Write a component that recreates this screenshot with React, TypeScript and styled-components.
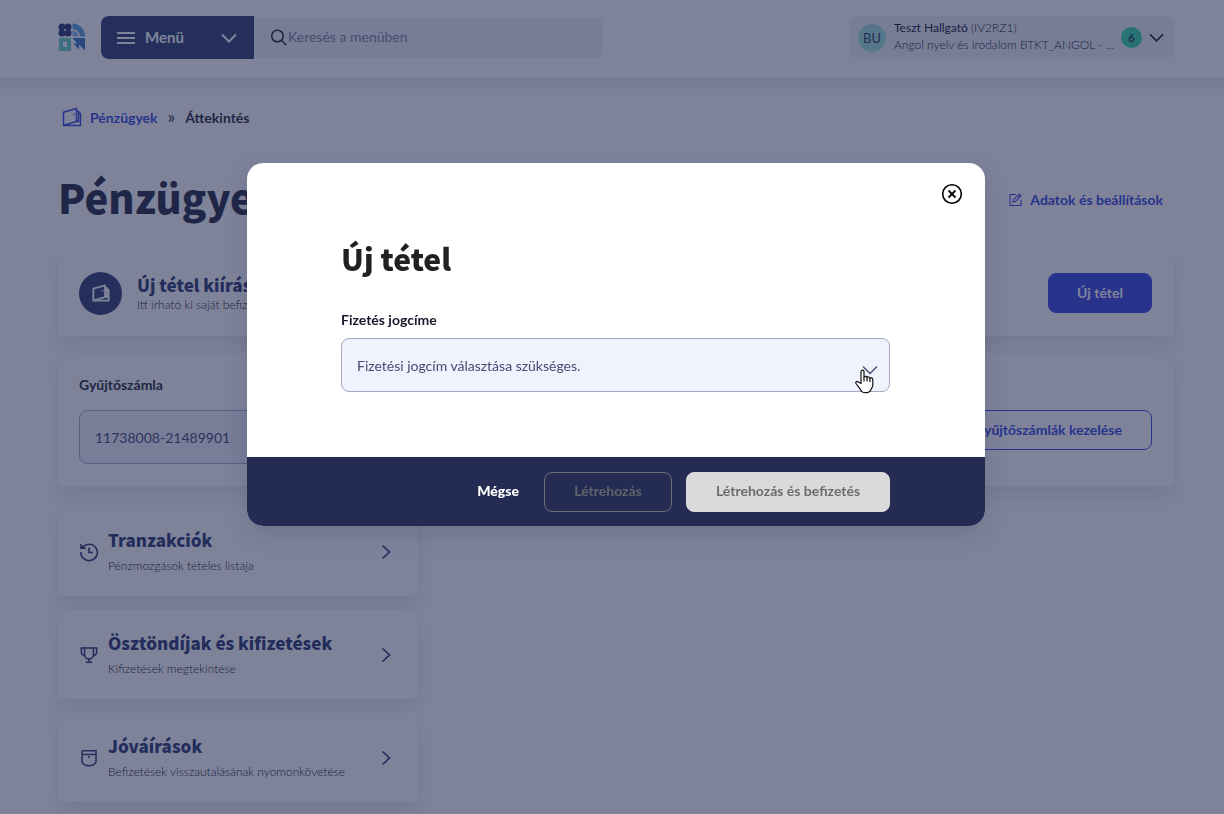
import React from "react";
import styled, { createGlobalStyle } from "styled-components";

const headingFont = `"Noto Sans CJK JP", "Open Sans", sans-serif`;
const navy = "#242c53";
const blue = "#303ddb";

const GlobalStyle = createGlobalStyle`
  *, *::before, *::after { box-sizing: border-box; }
  body { margin: 0; background: #fff; overflow: hidden; }
  body, button, input, select { font-family: Lato, "Open Sans", sans-serif; }
  h1, h2, h3, p { margin: 0; }
  button { margin: 0; padding: 0; border: 0; background: none; cursor: pointer; }
  a { color: inherit; text-decoration: none; }
  svg { display: block; flex: none; }
`;

const Header = styled.header`
  display: flex;
  align-items: center;
  height: 87px;
  padding: 0 50px 2px 58px;
  border-bottom: 10px solid #eeeff2;
  box-shadow: 0 4px 10px rgba(20, 20, 60, 0.04);
`;

const Logo = styled.a`
  margin-right: 15px;
`;

const MenuButton = styled.button`
  display: flex;
  align-items: center;
  width: 153px;
  height: 43px;
  padding: 0 17px 0 16px;
  border-radius: 8px 0 0 8px;
  background: #29346a;
  color: #fff;
  font-size: 15px;
  font-weight: 700;
  line-height: 20px;
`;

const MenuLabel = styled.span`
  flex: 1;
  padding: 0 0 2px 10px;
  text-align: left;
`;

const Search = styled.label`
  display: flex;
  align-items: center;
  flex: 0 1 349px;
  height: 40px;
  padding-left: 16px;
  border-radius: 0 8px 8px 0;
  background: #f0f1f5;
  color: #16182a;
`;

const SearchInput = styled.input`
  flex: 1;
  min-width: 0;
  padding: 0 0 2px;
  border: 0;
  outline: 0;
  background: none;
  font-size: 14px;
  &::placeholder { color: #777b98; }
`;

const Profile = styled.button`
  display: flex;
  align-items: center;
  width: 324px;
  height: 43px;
  margin-left: auto;
  padding: 0 10px 0 8px;
  border-radius: 8px;
  background: #f0f1f5;
  color: #060822;
  text-align: left;
`;

const Avatar = styled.span`
  display: grid;
  place-items: center;
  width: 28px;
  height: 28px;
  margin-right: 8px;
  border-radius: 50%;
  background: #9fe3d9;
  color: ${navy};
  font-size: 13px;
`;

const ProfileText = styled.span`
  flex: 1;
  min-width: 0;
  padding-bottom: 3px;
  font-size: 12px;
  font-weight: 300;
  line-height: 17px;
`;

const Line = styled.span`
  display: block;
  white-space: nowrap;
`;

const Count = styled.span`
  display: grid;
  place-items: center;
  width: 21px;
  height: 21px;
  margin: 0 7px 0 8px;
  border-radius: 50%;
  background: #2fd6a4;
  color: #14183a;
  font-size: 12px;
  font-weight: 600;
`;

const Main = styled.main`
  padding: 20px 50px 12px 58px;
`;

const Breadcrumb = styled.nav`
  display: flex;
  align-items: center;
  height: 20px;
  padding-left: 4px;
  color: #16182a;
  font-size: 14px;
  font-weight: 700;
`;

const CrumbLink = styled.a`
  display: flex;
  align-items: center;
  gap: 8px;
  color: ${blue};
`;

const Separator = styled.span`
  margin: 0 10px;
  padding-bottom: 2px;
  color: #16182a;
  font-size: 18px;
  font-weight: 400;
`;

const TitleRow = styled.div`
  display: flex;
  align-items: center;
  justify-content: space-between;
  height: 64px;
  margin: 40px 0 19px;
  padding-right: 11px;
`;

const PageTitle = styled.h1`
  padding-bottom: 4px;
  color: #1c1f36;
  font: 900 40px/60px ${headingFont};
`;

const SettingsLink = styled.a`
  display: flex;
  align-items: center;
  gap: 8px;
  color: ${blue};
  font-size: 14px;
  font-weight: 700;
`;

const Card = styled.section`
  border-radius: 4px;
  background: #fff;
  box-shadow: 0 10px 18px rgba(20, 20, 60, 0.1);
`;

const NewItemCard = styled(Card)`
  display: flex;
  align-items: center;
  height: 86px;
  padding: 0 22px 0 21px;
`;

const RoundIcon = styled.span`
  display: grid;
  place-items: center;
  width: 43px;
  height: 43px;
  margin-right: 15px;
  border-radius: 50%;
  background: #29346a;
  color: #fff;
`;

const CardText = styled.span`
  display: block;
  flex: 1;
`;

const CardTitle = styled.h2`
  color: #242e66;
  font: 900 17px/24px ${headingFont};
`;

const CardNote = styled.p`
  padding-bottom: 1px;
  color: #060822;
  font-size: 12px;
  font-weight: 300;
  line-height: 16px;
`;

const Button = styled.button<{ $kind: "solid" | "outline" | "ghost" | "disabled"; $width: number }>`
  width: ${(p) => p.$width}px;
  height: 40px;
  padding-bottom: 2px;
  border: 1px solid
    ${(p) => ({ solid: blue, outline: blue, ghost: "#6b6c74", disabled: "#dadada" })[p.$kind]};
  border-radius: 8px;
  background: ${(p) => ({ solid: blue, outline: "#fff", ghost: "none", disabled: "#dadada" })[p.$kind]};
  color: ${(p) => ({ solid: "#fff", outline: blue, ghost: "#62636b", disabled: "#6c6c6c" })[p.$kind]};
  font-size: 14px;
  font-weight: 700;
`;

const AccountCard = styled(Card)`
  height: 132px;
  margin-top: 18px;
  padding: 21px 22px 0 21px;
`;

const FieldLabel = styled.label`
  display: block;
  color: #16182a;
  font-size: 14px;
  font-weight: 700;
  line-height: 20px;
`;

const AccountRow = styled.div`
  display: flex;
  gap: 16px;
  margin-top: 15px;
`;

const AccountInput = styled.input`
  flex: 1;
  height: 54px;
  padding: 0 15px;
  border: 1px solid #a9a9c8;
  border-radius: 8px;
  background: #f0f1fa;
  color: #3a3f6e;
  font-size: 14px;
`;

const LinkList = styled.div`
  display: grid;
  gap: 14px;
  width: 360px;
  margin-top: 21px;
`;

const LinkCard = styled.a`
  display: flex;
  align-items: center;
  height: 89px;
  padding: 0 24px 0 22px;
  border-radius: 4px;
  background: #fff;
  box-shadow: 0 10px 18px rgba(20, 20, 60, 0.1);
  color: #242e66;
`;

const LinkText = styled(CardText)`
  padding: 0 0 2px 10px;
`;

const LinkNote = styled(CardNote)`
  margin-top: 6px;
  padding: 0;
`;

const Backdrop = styled.div`
  position: fixed;
  inset: 0;
  display: flex;
  align-items: flex-start;
  justify-content: center;
  padding: 163px 0 0 8px;
  background: rgba(36, 44, 83, 0.59);
`;

const Dialog = styled.div`
  width: 738px;
  max-width: 100%;
  overflow: hidden;
  border-radius: 16px;
  background: #fff;
  box-shadow: 0 8px 24px rgba(20, 20, 60, 0.14);
`;

const DialogTop = styled.div`
  display: flex;
  justify-content: flex-end;
  padding: 20px 22px 0;
  color: #111;
`;

const DialogBody = styled.div`
  padding: 30px 95px 65px 94px;
`;

const DialogTitle = styled.h2`
  color: #212121;
  font: 900 30px/46px ${headingFont};
`;

const DialogLabel = styled(FieldLabel)`
  margin: 29px 0 8px;
`;

const SelectBox = styled.div`
  position: relative;
  color: #45496f;
`;

const Select = styled.select`
  display: block;
  width: 100%;
  height: 54px;
  padding: 0 40px 0 15px;
  border: 1px solid #a6a8c4;
  border-radius: 8px;
  background: #f0f3fd;
  color: #45496f;
  font-size: 14px;
  appearance: none;
`;

const SelectArrow = styled.span`
  position: absolute;
  top: 24px;
  right: 12px;
  pointer-events: none;
`;

const Pointer = styled.span`
  position: absolute;
  top: 31px;
  right: 16px;
  pointer-events: none;
`;

const DialogFooter = styled.footer`
  display: flex;
  align-items: center;
  justify-content: flex-end;
  gap: 14px;
  height: 69px;
  padding-right: 95px;
  background: ${navy};
`;

const CancelButton = styled.button`
  margin-right: 11px;
  padding-bottom: 2px;
  color: #fff;
  font-size: 14px;
  font-weight: 900;
`;

function LogoMark() {
  return (
    <svg width="28" height="29" viewBox="0 0 28 29">
      <g fill="#1f2a68">
        <circle cx="4" cy="4" r="3.5" />
        <circle cx="10" cy="4" r="3.5" />
        <circle cx="4" cy="10" r="3.5" />
        <circle cx="10" cy="10" r="3.5" />
        <rect x="4" y="4" width="6" height="6" />
      </g>
      <circle cx="7" cy="7" r="1" fill="#fff" />
      <path d="M14.500 .5A12.500 13 0 0 1 27 13.500h-5A7.500 7.500 0 0 0 14.500 6z" fill="#4f9fe0" />
      <path d="M14.500 7.500a6 6 0 0 1 6 6h-6z" fill="#7db8ea" />
      <path d="M1.500 15.500h11v12h-11z M4.500 18.500v6h5v-6z" fill="#5ccdbb" fillRule="evenodd" stroke="#5ccdbb" />
      <path d="M14.500 15H27v12.500l-6-6v5l-6-6h4z" fill="#2d72c0" />
    </svg>
  );
}

function Burger() {
  return (
    <svg width="18" height="14" viewBox="0 0 18 14" stroke="currentColor" strokeWidth="2">
      <path d="M0 2h18M0 7h18M0 12h18" />
    </svg>
  );
}

function Chevron({ size = 16, width = 2 }: { size?: number; width?: number }) {
  return (
    <svg width={size} height={size} viewBox="0 0 16 16" fill="none" stroke="currentColor" strokeWidth={width}>
      <path d="M1 4.500l7 7 7-7" />
    </svg>
  );
}

function ChevronRight() {
  return (
    <svg width="16" height="16" viewBox="0 0 16 16" fill="none" stroke="currentColor" strokeWidth="1.700">
      <path d="M4.500 1.500l7 6.500-7 6.500" />
    </svg>
  );
}

function Magnifier() {
  return (
    <svg width="18" height="18" viewBox="0 0 18 18" fill="none" stroke="currentColor" strokeWidth="1.500">
      <circle cx="7.500" cy="7" r="5.800" />
      <path d="M11.500 11.200l5 5" />
    </svg>
  );
}

function Wallet({ size = 20, stroke = 1.5 }: { size?: number; stroke?: number }) {
  return (
    <svg
      width={size}
      height={size}
      viewBox="0 0 20 20"
      fill="none"
      stroke="currentColor"
      strokeWidth={stroke}
      strokeLinejoin="round"
    >
      <path d="M1.500 5.200 14.500 1.500v13L1.500 18.500z" />
      <path d="M1.500 18.500h17V6.200h-2M14.500 4.200h2v10.300h-2" />
      <path d="M11 7.500h1.500" />
    </svg>
  );
}

function EditIcon() {
  return (
    <svg width="13" height="13" viewBox="0 0 13 13" fill="none" stroke="currentColor" strokeWidth="1.100">
      <path d="M7 1.500H1v11h11V7" />
      <path d="M4 9.300l.6-2.600L10.300 1 12 2.700 6.400 8.600zM9 2.300l1.800 1.700" />
    </svg>
  );
}

function HistoryIcon() {
  return (
    <svg width="18" height="20" viewBox="0 0 18 20" fill="none" stroke="currentColor" strokeWidth="1.600">
      <path d="M2.500 5.500A8.200 8.200 0 1 1 .9 10" />
      <path d="M1 2v4.300h4.800M1.500 5.800L5 3.500" />
      <path d="M9 5.500v5h4" />
    </svg>
  );
}

function TrophyIcon() {
  return (
    <svg width="18" height="20" viewBox="0 0 18 20" fill="none" stroke="currentColor" strokeWidth="1.500">
      <path d="M4.500 3h9v6c0 3-2 5-4.500 5s-4.500-2-4.500-5z" />
      <path d="M4.500 3H1.300v3.500c0 2.500 1.500 4 3.700 4.500M13.500 3h3.200v3.500c0 2.500-1.500 4-3.700 4.500" />
      <path d="M9 14v3M5.800 17.300h6.400" />
    </svg>
  );
}

function PocketIcon() {
  return (
    <svg width="18" height="20" viewBox="0 0 18 20" fill="none" stroke="currentColor" strokeWidth="1.500">
      <path d="M2 2.700h14v11.500q-2 3.500-7 3.500t-7-3.500V2.700M2 6.500h14" />
      <path d="M8 9h2" />
    </svg>
  );
}

function CloseIcon() {
  return (
    <svg width="22" height="22" viewBox="0 0 22 22" fill="none" stroke="currentColor" strokeWidth="1.600">
      <circle cx="11" cy="11" r="9.300" />
      <path d="M7.500 7.500l7 7M14.500 7.500l-7 7" strokeWidth="1.800" />
    </svg>
  );
}

function HandIcon() {
  return (
    <svg width="19" height="25" viewBox="0 0 19 25" fill="#fff" stroke="#111" strokeWidth="1.200" strokeLinejoin="round">
      <path d="M6 14.500V2.800C6 .6 9 .6 9 2.800V8.500c.3-1.600 2.800-1.400 3 .3.500-1.300 2.700-1 2.900.6.600-1 2.900-.8 2.900 1.300v5c0 3-1.800 4.300-2.300 5.600-.6 1.700-2 2.400-5 2.400-2.500 0-4-1-5-3L1 14.500c-.8-1.700 1-2.700 2.300-1.500z" />
      <path d="M9 8.500v4M12 9v3.500M14.900 9.500v3.500" fill="none" />
    </svg>
  );
}

const links = [
  { title: "Tranzakciók", note: "Pénzmozgások tételes listája", icon: <HistoryIcon /> },
  { title: "Ösztöndíjak és kifizetések", note: "Kifizetések megtekintése", icon: <TrophyIcon /> },
  { title: "Jóváírások", note: "Befizetések visszautalásának nyomonkövetése", icon: <PocketIcon /> },
];

export default function App() {
  return (
    <>
      <GlobalStyle />
      <Header>
        <Logo href="#" aria-label="Neptun">
          <LogoMark />
        </Logo>
        <MenuButton>
          <Burger />
          <MenuLabel>Menü</MenuLabel>
          <Chevron />
        </MenuButton>
        <Search>
          <Magnifier />
          <SearchInput type="text" aria-label="Keresés" placeholder="Keresés a menüben" />
        </Search>
        <Profile>
          <Avatar>BU</Avatar>
          <ProfileText>
            <Line>
              <b>Teszt Hallgató</b> (IV2RZ1)
            </Line>
            <Line>Angol nyelv és irodalom BTKT_ANGOL - ...</Line>
          </ProfileText>
          <Count>6</Count>
          <Chevron size={15} width={1.7} />
        </Profile>
      </Header>
      <Main>
        <Breadcrumb>
          <CrumbLink href="#">
            <Wallet />
            Pénzügyek
          </CrumbLink>
          <Separator>»</Separator>
          Áttekintés
        </Breadcrumb>
        <TitleRow>
          <PageTitle>Pénzügyek</PageTitle>
          <SettingsLink href="#">
            <EditIcon />
            Adatok és beállítások
          </SettingsLink>
        </TitleRow>
        <NewItemCard>
          <RoundIcon>
            <Wallet size={18} stroke={2} />
          </RoundIcon>
          <CardText>
            <CardTitle>Új tétel kiírása</CardTitle>
            <CardNote>Itt írható ki saját befizetendő tétel</CardNote>
          </CardText>
          <Button $kind="solid" $width={104}>
            Új tétel
          </Button>
        </NewItemCard>
        <AccountCard>
          <FieldLabel htmlFor="account">Gyűjtőszámla</FieldLabel>
          <AccountRow>
            <AccountInput id="account" readOnly value="11738008-21489901" />
            <Button $kind="outline" $width={208}>
              Gyűjtőszámlák kezelése
            </Button>
          </AccountRow>
        </AccountCard>
        <LinkList>
          {links.map((link) => (
            <LinkCard href="#" key={link.title}>
              {link.icon}
              <LinkText>
                <CardTitle>{link.title}</CardTitle>
                <LinkNote>{link.note}</LinkNote>
              </LinkText>
              <ChevronRight />
            </LinkCard>
          ))}
        </LinkList>
      </Main>
      <Backdrop>
        <Dialog role="dialog" aria-modal="true" aria-labelledby="dialog-title">
          <DialogTop>
            <button aria-label="Bezárás">
              <CloseIcon />
            </button>
          </DialogTop>
          <DialogBody>
            <DialogTitle id="dialog-title">Új tétel</DialogTitle>
            <DialogLabel htmlFor="reason">Fizetés jogcíme</DialogLabel>
            <SelectBox>
              <Select id="reason">
                <option>Fizetési jogcím választása szükséges.</option>
              </Select>
              <SelectArrow>
                <Chevron width={1.3} />
              </SelectArrow>
              <Pointer>
                <HandIcon />
              </Pointer>
            </SelectBox>
          </DialogBody>
          <DialogFooter>
            <CancelButton>Mégse</CancelButton>
            <Button $kind="ghost" $width={128} disabled>
              Létrehozás
            </Button>
            <Button $kind="disabled" $width={204} disabled>
              Létrehozás és befizetés
            </Button>
          </DialogFooter>
        </Dialog>
      </Backdrop>
    </>
  );
}
